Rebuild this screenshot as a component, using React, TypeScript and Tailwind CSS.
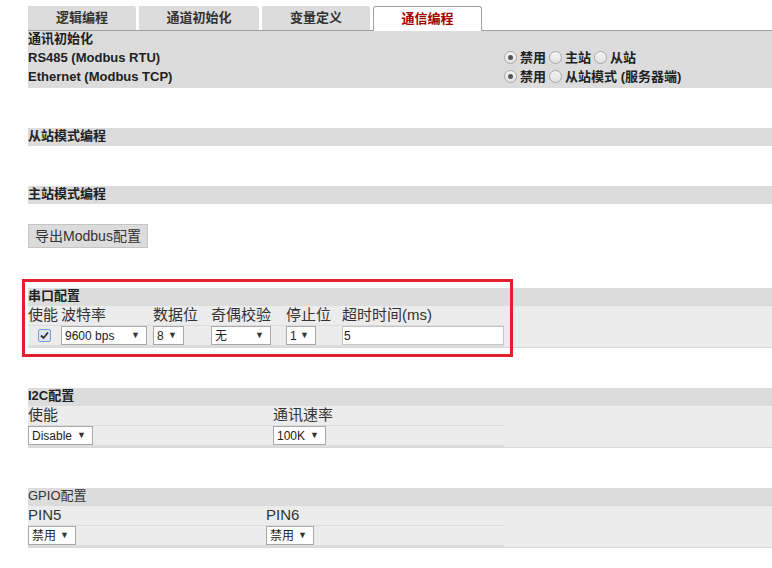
import React from "react";

const FONT = { fontFamily: '"Liberation Sans", Arial, "Noto Sans CJK SC", sans-serif' };

function Radio({ checked }: { checked?: boolean }) {
  return (
    <span className="inline-flex h-[13px] w-[13px] items-center justify-center rounded-full border border-[#a8a8a8] bg-gradient-to-b from-[#f4f4f4] to-[#e2e2e2] align-middle">
      {checked && <span className="h-[5px] w-[5px] rounded-full bg-[#555]" />}
    </span>
  );
}

function FakeSelect({ value, w }: { value: string; w: string }) {
  return (
    <div className={`flex h-[19px] items-center justify-between border border-[#a9a9a9] bg-white pl-[3px] pr-[6px] text-[12px] text-[#222] ${w}`}>
      <span>{value}</span>
      <span className="text-[9px] text-[#333]">▼</span>
    </div>
  );
}

function Bar({ title }: { title: string }) {
  return (
    <div className="h-[18px] bg-[#dcdcdc] text-[13px] font-bold leading-[16px] text-[#222]">{title}</div>
  );
}

const TABS = ["逻辑编程", "通道初始化", "变量定义"];

export default function App() {
  return (
    <div className="relative h-[568px] w-[772px] overflow-hidden bg-white pl-[28px]" style={FONT}>
      {/* tabs */}
      <div className="mt-[6px] flex h-[25px] items-end border-b border-[#a0a0a0]">
        {TABS.map((t, i) => (
          <div
            key={t}
            className={`mr-[3px] flex h-[24px] items-center justify-center rounded-tr-[3px] bg-[#dcdcdc] text-[13px] font-bold text-[#333] ${i === 1 ? "w-[120px]" : "w-[108px]"}`}
          >
            {t}
          </div>
        ))}
        <div className="-mb-px flex h-[25px] w-[109px] items-center justify-center rounded-t-[3px] border border-b-0 border-[#a0a0a0] bg-white text-[13px] font-bold text-[#a00000]">
          通信编程
        </div>
      </div>

      {/* 通讯初始化 */}
      <div className="h-[57px] bg-[#dcdcdc] text-[13px] font-bold text-[#222]">
        <div className="h-[17px] leading-[15px]">通讯初始化</div>
        <div className="flex h-[19px] items-center">
          <span className="w-[476px]">RS485 (Modbus RTU)</span>
          <span className="flex items-center gap-[3px]">
            <Radio checked /> 禁用 <Radio /> 主站 <Radio /> 从站
          </span>
        </div>
        <div className="flex h-[19px] items-center">
          <span className="w-[476px]">Ethernet (Modbus TCP)</span>
          <span className="flex items-center gap-[3px]">
            <Radio checked /> 禁用 <Radio /> 从站模式 (服务器端)
          </span>
        </div>
      </div>

      <div className="mt-[40px]">
        <Bar title="从站模式编程" />
      </div>
      <div className="mt-[40px]">
        <Bar title="主站模式编程" />
      </div>

      <button className="mt-[20px] h-[24px] w-[120px] border border-[#c4c4c4] bg-[#dcdcdc] text-[14px] text-[#333]">
        导出Modbus配置
      </button>

      {/* 串口配置 */}
      <div className="mt-[40px]">
        <Bar title="串口配置" />
        <div className="h-[42px] border-b border-[#d8d8d8] bg-[#ececec]">
          <div className="w-[476px]">
            <div className="flex h-[20px] items-center border-b border-[#dcdcdc] text-[15px] text-[#333]">
              <span className="w-[33px]">使能</span>
              <span className="w-[92px]">波特率</span>
              <span className="w-[58px]">数据位</span>
              <span className="w-[75px]">奇偶校验</span>
              <span className="w-[56px]">停止位</span>
              <span>超时时间(ms)</span>
            </div>
            <div className="flex h-[21px] items-center border-b-2 border-[#dcdcdc]">
              <span className="flex w-[33px] justify-center">
                <span className="flex h-[13px] w-[13px] items-center justify-center rounded-[2px] border border-[#6f9fe0] bg-[#dfe6f0]">
                  <svg width="9" height="9" viewBox="0 0 9 9">
                    <path d="M1 4.5 L3.5 7 L8 1.5" fill="none" stroke="#333" strokeWidth="1.8" />
                  </svg>
                </span>
              </span>
              <span className="w-[92px]"><FakeSelect value="9600 bps" w="w-[86px]" /></span>
              <span className="w-[58px]"><FakeSelect value="8" w="w-[31px]" /></span>
              <span className="w-[75px]"><FakeSelect value="无" w="w-[60px]" /></span>
              <span className="w-[56px]"><FakeSelect value="1" w="w-[30px]" /></span>
              <input
                defaultValue="5"
                className="h-[19px] w-[162px] border border-[#c4c4c4] bg-white px-[1px] text-[12px] text-[#222] outline-none"
              />
            </div>
          </div>
        </div>
      </div>

      {/* I2C配置 */}
      <div className="mt-[40px]">
        <Bar title="I2C配置" />
        <div className="h-[42px] border-b border-[#d8d8d8] bg-[#ececec]">
          <div className="w-[476px]">
            <div className="flex h-[20px] items-center border-b border-[#dcdcdc] text-[15px] text-[#333]">
              <span className="w-[245px]">使能</span>
              <span>通讯速率</span>
            </div>
            <div className="flex h-[21px] items-center border-b-2 border-[#dcdcdc]">
              <span className="w-[245px]"><FakeSelect value="Disable" w="w-[65px]" /></span>
              <FakeSelect value="100K" w="w-[53px]" />
            </div>
          </div>
        </div>
      </div>

      {/* GPIO配置 */}
      <div className="mt-[40px]">
        <div className="h-[18px] bg-[#dcdcdc] text-[13px] leading-[16px] text-[#333]">GPIO配置</div>
        <div className="h-[42px] border-b border-[#d8d8d8] bg-[#ececec]">
          <div className="w-[476px]">
            <div className="flex h-[20px] items-center border-b border-[#dcdcdc] text-[15px] text-[#333]">
              <span className="w-[238px]">PIN5</span>
              <span>PIN6</span>
            </div>
            <div className="flex h-[21px] items-center border-b-2 border-[#dcdcdc]">
              <span className="w-[238px]"><FakeSelect value="禁用" w="w-[48px]" /></span>
              <FakeSelect value="禁用" w="w-[48px]" />
            </div>
          </div>
        </div>
      </div>

      {/* red highlight annotation */}
      <div className="pointer-events-none absolute left-[22px] top-[279px] h-[78px] w-[491px] border-[3px] border-[#e3202c]" />
    </div>
  );
}
